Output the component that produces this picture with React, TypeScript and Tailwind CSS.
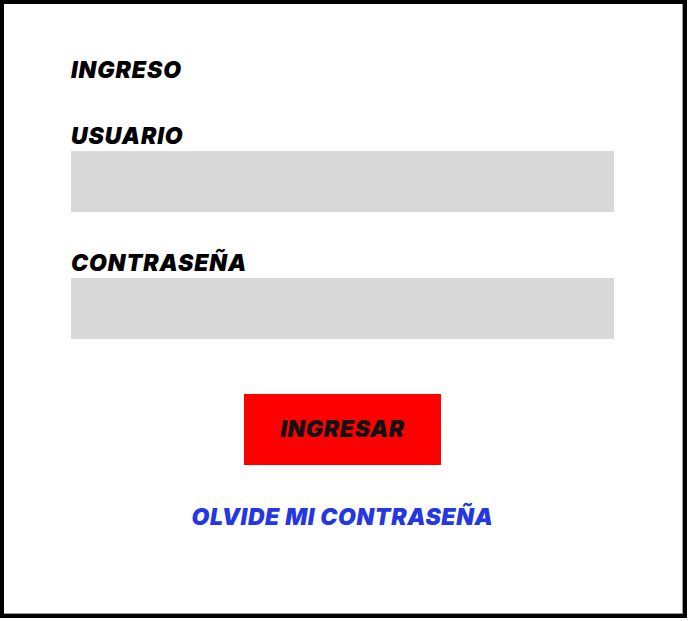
import React from "react";

export default function App() {
  const font = { fontFamily: "Inter, 'Noto Sans', sans-serif" };
  return (
    <div className="w-[688px] h-[621px] bg-white" style={font}>
      <div className="w-[687px] h-[618px] border-4 border-black bg-white">
        <div className="h-full w-full border-r border-b border-[#9a9a9a] flex flex-col pl-[67px] pr-[68px] pt-[52px]">
          <div className="text-[23px] leading-[28px] font-black italic tracking-[0.9px] text-black">INGRESO</div>
          <div className="mt-[38px] text-[23px] leading-[28px] font-black italic tracking-[0.9px] text-black">USUARIO</div>
          <div className="mt-px h-[61px] bg-[#d9d9d9]" />
          <div className="mt-[37px] text-[23px] leading-[28px] font-black italic tracking-[0.9px] text-black">CONTRASEÑA</div>
          <div className="mt-px h-[61px] bg-[#d9d9d9]" />
          <div className="mt-[55px] flex justify-center">
            <button className="w-[197px] h-[71px] bg-[#ff0000] text-[23px] font-black italic tracking-[0.6px] text-[#111111]">
              INGRESAR
            </button>
          </div>
          <div className="mt-[38px] text-center text-[23px] leading-[28px] font-black italic tracking-[0.6px] text-[#2437e0]">
            OLVIDE MI CONTRASEÑA
          </div>
        </div>
      </div>
    </div>
  );
}
